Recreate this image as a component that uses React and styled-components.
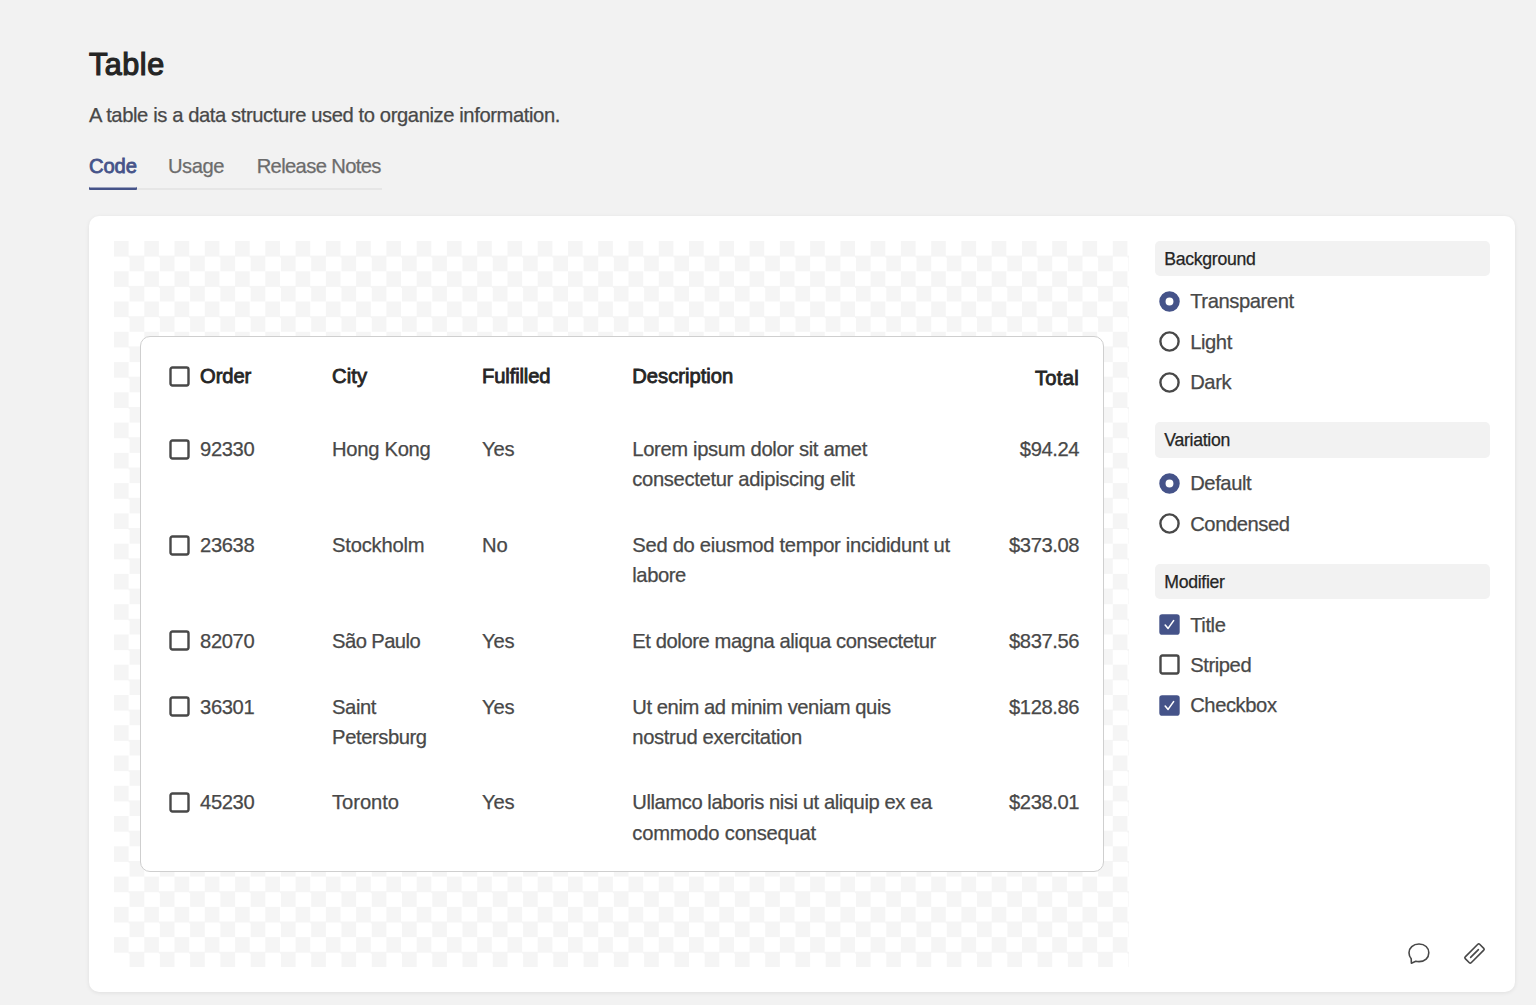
import React, { useState } from "react";
import styled, { createGlobalStyle } from "styled-components";

const color = {
  page: "#f2f2f2",
  accent: "#455389",
  title: "#252525",
  text: "#484848",
  muted: "#6c6c6c",
};

const GlobalStyle = createGlobalStyle`
  *, *::before, *::after { box-sizing: border-box; }
  body {
    margin: 0;
    background: ${color.page};
    color: ${color.text};
    font-family: "Liberation Sans", Arial, sans-serif;
    font-size: 20.2px;
    line-height: 30.3px;
    letter-spacing: -0.42px;
    -webkit-text-stroke: 0.25px currentColor;
    overflow: hidden;
  }
`;

const Page = styled.main`
  width: 1536px;
  height: 1005px;
  padding: 44px 21px 13px 89px;
  display: flex;
  flex-direction: column;
`;

const Title = styled.h1`
  margin: 0;
  font-size: 30.5px;
  line-height: 40px;
  font-weight: 400;
  letter-spacing: 0.55px;
  color: ${color.title};
  -webkit-text-stroke: 1.2px ${color.title};
`;

const Lead = styled.p`
  margin: 16px 0 0;
  line-height: 30px;
  letter-spacing: -0.4px;
`;

const TabList = styled.nav`
  display: flex;
  align-self: flex-start;
  width: 293px;
  margin-top: 21px;
  height: 39.4px;
  box-shadow: inset 0 -2px 0 #e6e6e6;
`;

const Tab = styled.button`
  border: 0;
  padding: 0 0 8.4px;
  margin-right: ${(p) => p.$gap};
  background: none;
  font: inherit;
  white-space: nowrap;
  letter-spacing: ${(p) => p.$tracking};
  color: ${(p) => (p.$active ? color.accent : color.muted)};
  -webkit-text-stroke: ${(p) => (p.$active ? "0.8px" : "0.25px")} currentColor;
  box-shadow: ${(p) => (p.$active ? `inset 0 -2.5px 0 ${color.accent}` : "none")};
  border-radius: 1px;
`;

const Card = styled.section`
  display: flex;
  gap: 26px;
  margin-top: 25.6px;
  height: 777px;
  padding: 25px;
  background: #fff;
  border-radius: 10px;
  box-shadow: 0 1px 4px rgba(0, 0, 0, 0.08);
`;

const Canvas = styled.div`
  width: 1014.6px;
  height: 726.5px;
  padding: 0 25px 0 25.8px;
  display: flex;
  align-items: center;
  background: repeating-conic-gradient(#fff 0 25%, #f5f5f5 0 50%) 0 0 / 30.27px 30.27px;
`;

const Frame = styled.div`
  width: 100%;
  height: 536px;
  padding: 5px 23.5px 5px 28.5px;
  background: #fff;
  border: 1px solid #cfcfcf;
  border-radius: 10px;
`;

const Table = styled.div`
  letter-spacing: -0.26px;
`;

const Row = styled.div`
  display: grid;
  grid-template-columns: 162.8px 150px 150.2px 340px 1fr;
  padding: ${(p) => (p.$head ? "19.5px 0 25px" : "17.65px 0")};
`;

const Cell = styled.div`
  display: flex;
  align-items: flex-start;
  gap: 9.8px;
  padding-right: ${(p) => (p.$end ? 0 : "10px")};
  justify-content: ${(p) => (p.$end ? "flex-end" : "flex-start")};
  letter-spacing: ${(p) => p.$tracking || "inherit"};
`;

const HeadCell = styled(Cell)`
  color: ${color.title};
  -webkit-text-stroke: 0.8px ${color.title};
  padding-top: ${(p) => (p.$end ? "2px" : 0)};
  margin-bottom: ${(p) => (p.$end ? "-2px" : 0)};
`;

const Lines = styled.div`
  display: flex;
  flex-direction: column;
`;

const Line = styled.span`
  white-space: nowrap;
  letter-spacing: ${(p) => p.$tracking};
`;

const Panel = styled.aside`
  flex: 1;
  display: flex;
  flex-direction: column;
`;

const Group = styled.div`
  margin-bottom: 20.2px;
`;

const GroupTitle = styled.h2`
  margin: 0 0 5.05px;
  height: 35.35px;
  padding: 1px 0 0 9.7px;
  font-size: 17.67px;
  line-height: 34.8px;
  font-weight: 400;
  letter-spacing: -0.3px;
  color: ${color.title};
  background: ${color.page};
  border-radius: 5px;
`;

const Option = styled.label`
  display: flex;
  align-items: flex-start;
  gap: 10.2px;
  height: 40.4px;
  padding: 5.5px 0 4px 4.4px;
`;

const Mark = styled.svg`
  flex: none;
  width: 21px;
  height: 21px;
  margin-top: 4.5px;
  fill: #fff;
  stroke: ${color.text};
  stroke-width: 2.4;
  stroke-linecap: round;
  stroke-linejoin: round;
`;

const Actions = styled.footer`
  display: flex;
  justify-content: flex-end;
  gap: 31px;
  margin-top: auto;
  padding: 0 3px 1px 0;
`;

const Icon = styled.svg`
  display: block;
  width: 25px;
  height: 25px;
  fill: none;
  stroke: ${color.text};
  stroke-width: 1.6;
  stroke-linejoin: round;
  stroke-linecap: round;
`;

function CheckBox({ on }) {
  return (
    <Mark viewBox="0 0 21 21">
      {on ? (
        <>
          <rect x="0.3" y="0.3" width="20.4" height="20.4" rx="2.8" fill={color.accent} stroke="none" />
          <path d="M6.2 11 9.1 14.4 14.6 6.6" fill="none" stroke="#fff" strokeWidth="1.6" />
        </>
      ) : (
        <rect x="1.5" y="1.5" width="18" height="18" rx="1.9" />
      )}
    </Mark>
  );
}

function Radio({ on }) {
  return (
    <Mark viewBox="0 0 21 21">
      {on ? (
        <circle cx="10.5" cy="10.5" r="7.1" stroke={color.accent} strokeWidth="6.3" />
      ) : (
        <circle cx="10.5" cy="10.5" r="9.1" />
      )}
    </Mark>
  );
}

const tabs = [
  ["Code", "-0.1px", "31px"],
  ["Usage", "-0.42px", "32.5px"],
  ["Release Notes", "-0.64px", "0"],
];

const rows = [
  ["92330", [["Hong Kong", "-0.3px"]], "Yes", [["Lorem ipsum dolor sit amet", "-0.34px"], ["consectetur adipiscing elit", "-0.33px"]], "$94.24"],
  ["23638", [["Stockholm", "-0.22px"]], "No", [["Sed do eiusmod tempor incididunt ut", "-0.29px"], ["labore", "-0.42px"]], "$373.08"],
  ["82070", [["São Paulo", "-0.58px"]], "Yes", [["Et dolore magna aliqua consectetur", "-0.41px"]], "$837.56"],
  ["36301", [["Saint", "-0.45px"], ["Petersburg", "-0.42px"]], "Yes", [["Ut enim ad minim veniam quis", "-0.43px"], ["nostrud exercitation", "-0.33px"]], "$128.86"],
  ["45230", [["Toronto", "-0.08px"]], "Yes", [["Ullamco laboris nisi ut aliquip ex ea", "-0.43px"], ["commodo consequat", "-0.22px"]], "$238.01"],
];

const groups = [
  { title: "Background", kind: "radio", options: [["Transparent", true], ["Light", false], ["Dark", false]] },
  { title: "Variation", kind: "radio", options: [["Default", true], ["Condensed", false]] },
  { title: "Modifier", kind: "check", options: [["Title", true], ["Striped", false], ["Checkbox", true]] },
];

function TextLines({ lines }) {
  return (
    <Lines>
      {lines.map(([line, tracking]) => (
        <Line key={line} $tracking={tracking}>{line}</Line>
      ))}
    </Lines>
  );
}

export default function App() {
  const [active, setActive] = useState("Code");
  return (
    <>
      <GlobalStyle />
      <Page>
        <Title>Table</Title>
        <Lead>A table is a data structure used to organize information.</Lead>
        <TabList>
          {tabs.map(([name, tracking, gap]) => (
            <Tab key={name} $active={active === name} $tracking={tracking} $gap={gap} onClick={() => setActive(name)}>
              {name}
            </Tab>
          ))}
        </TabList>
        <Card>
          <Canvas>
            <Frame>
              <Table>
                <Row $head>
                  <HeadCell $tracking="-0.1px"><CheckBox />Order</HeadCell>
                  <HeadCell $tracking="0.05px">City</HeadCell>
                  <HeadCell $tracking="-0.15px">Fulfilled</HeadCell>
                  <HeadCell $tracking="0">Description</HeadCell>
                  <HeadCell $end $tracking="0.3px">Total</HeadCell>
                </Row>
                {rows.map(([order, city, fulfilled, description, total]) => (
                  <Row key={order}>
                    <Cell $tracking="-0.4px"><CheckBox />{order}</Cell>
                    <Cell><TextLines lines={city} /></Cell>
                    <Cell>{fulfilled}</Cell>
                    <Cell><TextLines lines={description} /></Cell>
                    <Cell $end $tracking="-0.42px">{total}</Cell>
                  </Row>
                ))}
              </Table>
            </Frame>
          </Canvas>
          <Panel>
            {groups.map((group) => (
              <Group key={group.title}>
                <GroupTitle>{group.title}</GroupTitle>
                {group.options.map(([label, on]) => (
                  <Option key={label}>
                    {group.kind === "radio" ? <Radio on={on} /> : <CheckBox on={on} />}
                    {label}
                  </Option>
                ))}
              </Group>
            ))}
            <Actions>
              <Icon viewBox="0 0 25 25">
                <path d="M13 3C7 3 3 6.9 3 11.7c0 2.5.8 4.4 2.2 6.1l.2 4.4 4.4-1.9c1 .3 2.1.3 3.2.3 6 0 9.8-3.8 9.8-8.8S19 3 13 3Z" />
              </Icon>
              <Icon viewBox="0 0 25 25">
                <g transform="rotate(-45 12.5 12.5)">
                  <rect x="2.3" y="8.3" width="20.4" height="8.4" rx="1.3" />
                  <path d="M7 12.5h11" />
                </g>
              </Icon>
            </Actions>
          </Panel>
        </Card>
      </Page>
    </>
  );
}
